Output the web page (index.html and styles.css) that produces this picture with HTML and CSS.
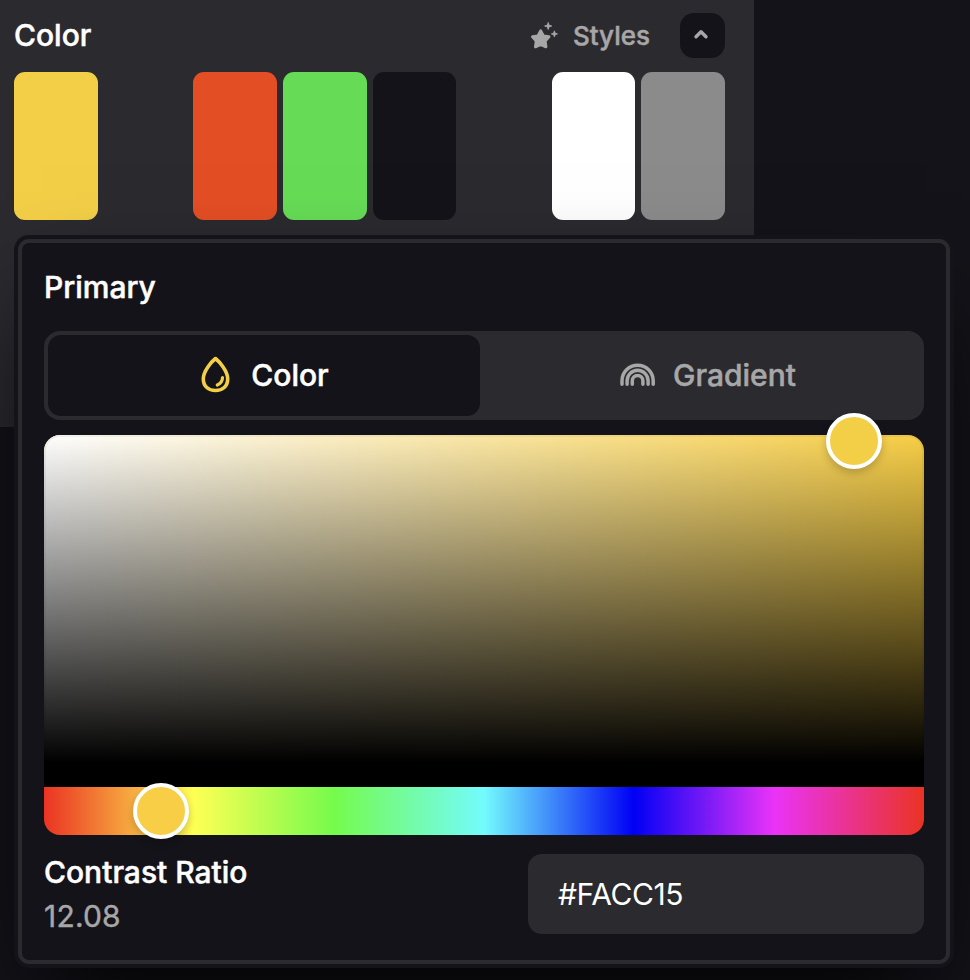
FILE: index.html
```
<!DOCTYPE html>
<html lang="en">
<head>
<meta charset="utf-8">
<title>Color</title>
<link rel="stylesheet" href="styles.css">
</head>
<body>
<section class="panel">
  <header class="panel-header">
    <h2 class="title panel-title">Color</h2>
    <div class="actions">
      <button class="styles-button">
        <svg class="stars-icon" width="30" height="30" viewBox="0 0 30 30" fill="currentColor" stroke="currentColor" stroke-linejoin="round">
          <path stroke-width="3" d="M11.700 9.900l2.700 5 5.500.9-3.800 4.200.8 5.800-5.200-2.300-5.200 2.300.8-5.800-3.800-4.200 5.500-.9z"/>
          <path stroke-width=".8" d="M19.200 1.400l.9 2.700 2.700.9-2.700.9-.9 2.700-.9-2.700-2.700-.9 2.700-.9zM25.400 9.800l.8 2.300 2.300.8-2.300.8-.8 2.300-.8-2.300-2.300-.8 2.300-.8z"/>
        </svg>
        <span>Styles</span>
      </button>
      <button class="collapse-button" aria-label="Collapse">
        <svg width="16" height="12" viewBox="0 0 16 12" fill="none" stroke="currentColor" stroke-width="3.400" stroke-linecap="round" stroke-linejoin="round"><path d="M3 8.800L8 3.700l5 5.100"/></svg>
      </button>
    </div>
  </header>
  <div class="swatches">
    <div class="swatch yellow"></div>
    <div class="swatch red"></div>
    <div class="swatch green"></div>
    <div class="swatch dark"></div>
    <div class="swatch white"></div>
    <div class="swatch gray"></div>
  </div>
</section>
<section class="popover">
  <h3 class="title">Primary</h3>
  <div class="tabs">
    <button class="tab active">
      <svg class="drop-icon" width="30" height="38" viewBox="0 0 30 38" fill="none" stroke="currentColor" stroke-linecap="round" stroke-linejoin="round">
        <path stroke-width="3.600" d="M15.500 2.500C11.500 5.700 3.300 15 3.300 23C3.300 30.300 8.500 34.500 15.500 34.500S27.700 30.300 27.700 23C27.700 15 19.500 5.700 15.500 2.500z"/>
        <path stroke-width="3.200" d="M22.500 21.500c0 3-2 6-5.200 7.500"/>
      </svg>
      <span>Color</span>
    </button>
    <button class="tab gradient-tab">
      <svg class="rainbow-icon" width="36" height="24" viewBox="0 0 36 24" fill="none" stroke="currentColor" stroke-width="3.500" stroke-linecap="round">
        <path d="M2 21.200v-3.400a15.600 15.600 0 0 1 31.200 0v3.400M7.100 21.200v-3.400a10.500 10.500 0 0 1 21 0v3.400M12.300 21.200v-3.400a5.300 5.300 0 0 1 10.600 0v3.400"/>
      </svg>
      <span>Gradient</span>
    </button>
  </div>
  <div class="picker">
    <div class="saturation"><div class="thumb saturation-thumb"></div></div>
    <div class="hue"><div class="thumb hue-thumb"></div></div>
  </div>
  <footer class="details">
    <div class="contrast">
      <div class="label">Contrast Ratio</div>
      <div class="ratio">12.08</div>
    </div>
    <div class="hex">#FACC15</div>
  </footer>
</section>
</body>
</html>
```
FILE: styles.css
```
* { box-sizing: border-box; }
body {
  margin: 0;
  height: 980px;
  overflow: hidden;
  background: #141319;
  color: #fff;
  font-family: Inter, sans-serif;
  font-size: 30px;
  font-weight: 500;
  -webkit-text-stroke: .5px currentColor;
}
button {
  border: 0;
  padding: 0;
  background: none;
  font: inherit;
  color: #a7a7a8;
}
.panel {
  width: 754px;
  height: 427px;
  padding: 13px 29px 0 14px;
  background: #2b2a2f;
}
.panel-header {
  display: flex;
  justify-content: space-between;
  align-items: center;
  height: 45px;
}
.title { margin: 0; font-size: 30px; font-weight: 500; line-height: 36px; }
.panel-title { padding-bottom: 1px; }
.actions { display: flex; align-items: center; gap: 30px; }
.styles-button {
  display: flex;
  align-items: center;
  gap: 14px;
  font-size: 26px;
  line-height: 36px;
}
.collapse-button {
  display: flex;
  align-items: center;
  justify-content: center;
  width: 45px;
  height: 45px;
  padding-right: 3px;
  padding-bottom: 3px;
  border-radius: 14px;
  background: #141319;
}
.swatches {
  display: grid;
  grid-template-columns: repeat(8, 1fr);
  gap: 6px;
  margin-top: 14px;
}
.swatch { height: 148px; border-radius: 11px; }
.yellow { background: #f3cf48; }
.red { grid-column: 3; background: #e44e25; }
.green { background: #66dc56; }
.dark { background: #141319; }
.white { grid-column: 7; background: #fff; }
.gray { background: #8b8b8b; }
.popover {
  position: absolute;
  left: 18px;
  top: 239px;
  width: 932px;
  height: 725px;
  padding: 26px 22px 0;
  border: 4px solid #2b2a2f;
  border-radius: 11px;
  background: #141319;
  box-shadow: 0 0 0 4px #141319, 0 50px 100px -24px #000;
}
.tabs {
  display: grid;
  grid-template-columns: 1fr 1fr;
  gap: 8px;
  height: 89px;
  margin-top: 26px;
  padding: 4px;
  border-radius: 16px;
  background: #2b2a2f;
}
.tab {
  display: flex;
  align-items: center;
  justify-content: center;
  gap: 17px;
  border-radius: 13px;
  padding-bottom: 1px;
}
.active { background: #141319; color: #fff; gap: 21px; padding-left: 1px; }
.gradient-tab { padding-left: 8px; }
.drop-icon { color: #f3cf48; }
.picker { margin-top: 15px; }
.saturation {
  position: relative;
  height: 352px;
  border-bottom: 24px solid #000;
  border-radius: 16px 16px 0 0;
  background: linear-gradient(to top, #000, transparent), linear-gradient(to right, #fff, rgba(255,255,255,0)), #f7ce46;
  box-shadow: inset 0 0 0 2px rgba(0,0,0,.05);
}
.hue {
  position: relative;
  height: 48px;
  border-radius: 0 0 16px 16px;
  background: linear-gradient(to right, #ea3323 0%, #ffff54 17%, #75fb4c 33%, #73fbfd 50%, #0000f5 67%, #ea33f7 83%, #ea3323 100%);
}
.thumb {
  position: absolute;
  width: 56px;
  height: 56px;
  border: 4px solid #fff;
  border-radius: 50%;
  transform: translate(-50%, -50%);
  box-shadow: 0 4px 8px rgba(0,0,0,.2);
}
.saturation-thumb { left: 810px; top: 6px; background: #f3cf48; }
.hue-thumb { left: 117px; top: 24px; background: #f7ce46; }
.details {
  display: flex;
  justify-content: space-between;
  margin-top: 19px;
}
.contrast { line-height: 36px; }
.ratio {
  margin-top: 8px;
  color: #a7a7a8;
  font-weight: 400;
  letter-spacing: .2px;
  -webkit-text-stroke-width: .4px;
}
.hex {
  width: 396px;
  height: 80px;
  padding-left: 30px;
  border-radius: 14px;
  background: #2b2a2f;
  font-weight: 400;
  line-height: 80px;
  letter-spacing: -.4px;
  -webkit-text-stroke-width: 0;
}
```
